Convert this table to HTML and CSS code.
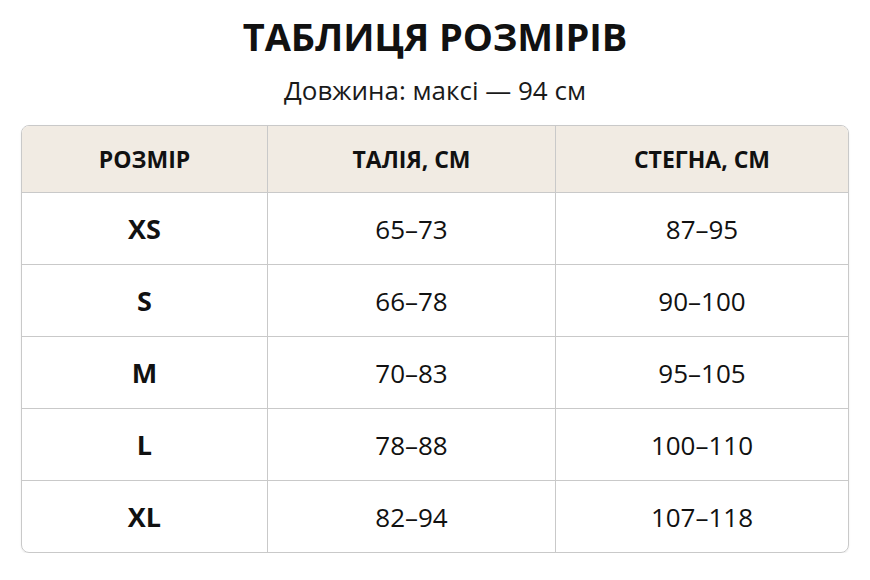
FILE: index.html
```html
<!DOCTYPE html>
<html lang="uk">
<head>
<meta charset="utf-8">
<title>Таблиця розмірів</title>
<link rel="stylesheet" href="styles.css">
</head>
<body>
<main class="page">
  <h1 class="title">ТАБЛИЦЯ РОЗМІРІВ</h1>
  <p class="subtitle">Довжина: максі — 94 см</p>
  <div class="size-table">
    <div class="row head">
      <div class="cell">РОЗМІР</div>
      <div class="cell">ТАЛІЯ, СМ</div>
      <div class="cell">СТЕГНА, СМ</div>
    </div>
    <div class="row">
      <div class="cell size">XS</div>
      <div class="cell">65–73</div>
      <div class="cell">87–95</div>
    </div>
    <div class="row">
      <div class="cell size">S</div>
      <div class="cell">66–78</div>
      <div class="cell">90–100</div>
    </div>
    <div class="row">
      <div class="cell size">M</div>
      <div class="cell">70–83</div>
      <div class="cell">95–105</div>
    </div>
    <div class="row">
      <div class="cell size">L</div>
      <div class="cell">78–88</div>
      <div class="cell">100–110</div>
    </div>
    <div class="row">
      <div class="cell size">XL</div>
      <div class="cell">82–94</div>
      <div class="cell">107–118</div>
    </div>
  </div>
</main>
</body>
</html>
```

FILE: styles.css
```css
html, body {
  margin: 0;
  padding: 0;
  background: #ffffff;
}

body {
  font-family: "Open Sans", "Noto Sans", "Liberation Sans", sans-serif;
  color: #111111;
}

.page {
  padding: 12px 21px 0;
}

.title {
  margin: 0;
  text-align: center;
  font-size: 38px;
  line-height: 48px;
  font-weight: 700;
  letter-spacing: -0.1px;
}

.subtitle {
  margin: 14px 0 0;
  text-align: center;
  font-size: 26px;
  line-height: 32px;
  font-weight: 400;
  color: #1a1a1a;
}

.size-table {
  margin-top: 19px;
  border: 1px solid #c9c9c9;
  border-radius: 8px;
  overflow: hidden;
  box-shadow: 0 1px 2px rgba(0, 0, 0, 0.08);
}

.row {
  display: grid;
  grid-template-columns: 245px 288px 1fr;
  height: 71px;
}

.row + .row {
  border-top: 1px solid #c9c9c9;
}

.row.head {
  height: 66px;
  background: #f1ebe3;
}

.cell {
  display: flex;
  align-items: center;
  justify-content: center;
  font-size: 26px;
  font-weight: 400;
}

.cell + .cell {
  border-left: 1px solid #c9c9c9;
}

.head .cell {
  font-size: 23px;
  font-weight: 700;
}

.cell.size {
  font-size: 27px;
  font-weight: 700;
}
```
